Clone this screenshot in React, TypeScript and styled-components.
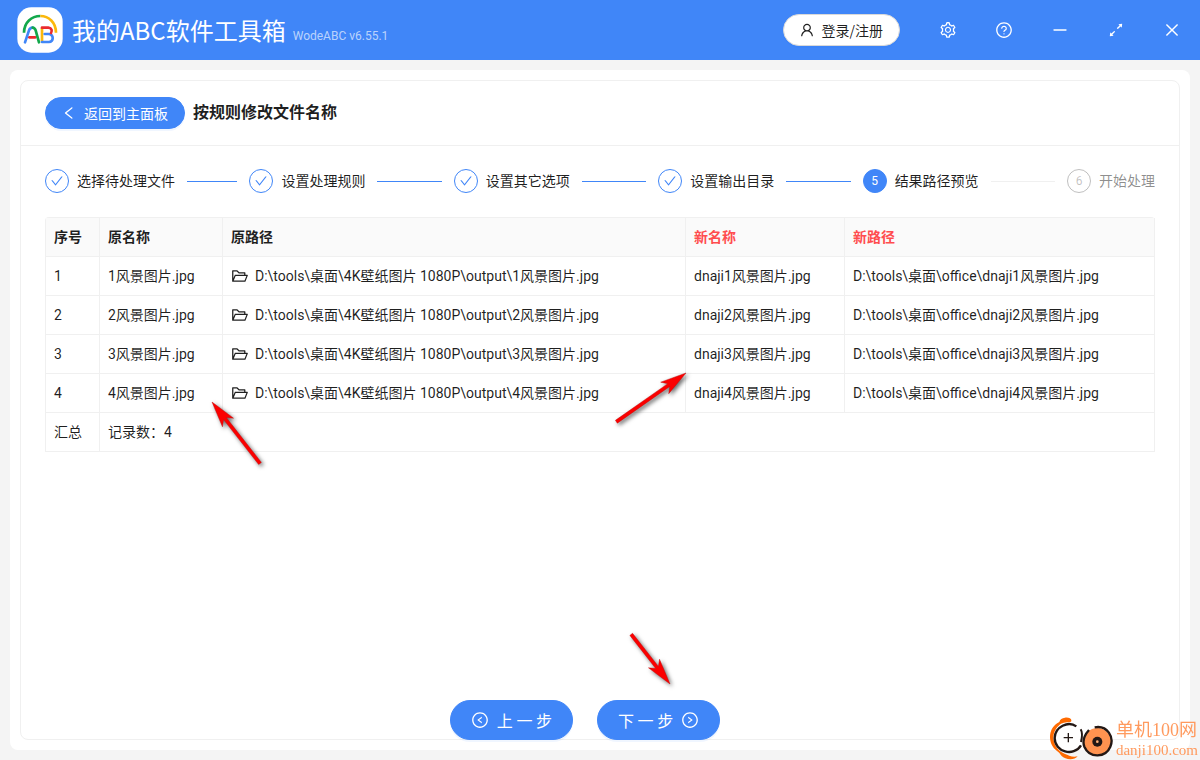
import React from "react";
import styled, { createGlobalStyle, css } from "styled-components";
import {
  AiOutlineArrowsAlt,
  AiOutlineCheck,
  AiOutlineClose,
  AiOutlineFolderOpen,
  AiOutlineLeft,
  AiOutlineLeftCircle,
  AiOutlineMinus,
  AiOutlineQuestionCircle,
  AiOutlineRightCircle,
  AiOutlineSetting,
  AiOutlineUser,
} from "react-icons/ai";

const blue = "#4086f8";
const line = "#f0f0f0";
const ink = "rgba(0, 0, 0, 0.88)";

const GlobalStyle = createGlobalStyle`
  *, *::before, *::after { box-sizing: border-box; }
  body {
    margin: 0;
    background: #f4f4f4;
    color: ${ink};
    font-family: Roboto, "Noto Sans CJK SC", sans-serif;
    font-size: 14px;
    line-height: 22px;
  }
  button { font: inherit; cursor: pointer; }
  svg { display: block; flex: none; }
`;

const Window = styled.div`
  min-height: 100vh;
  display: flex;
  flex-direction: column;
`;

const TitleBar = styled.header`
  height: 60px;
  display: flex;
  align-items: center;
  padding-left: 17px;
  background: ${blue};
  color: #fff;
`;

const Brand = styled.div`
  flex: 1;
  display: flex;
  align-items: baseline;
  gap: 7px;
  margin-left: 9px;
  white-space: nowrap;
`;

const AppName = styled.h1`
  margin: 0;
  font-family: "Noto Sans CJK SC", sans-serif;
  font-size: 24px;
  line-height: 32px;
  font-weight: 400;
`;

const Version = styled.span`
  font-size: 12px;
  color: rgba(255, 255, 255, 0.65);
`;

const Pill = styled.button<{ $light?: boolean; $large?: boolean }>`
  display: inline-flex;
  align-items: center;
  gap: ${(p) => (p.$large ? 8 : 7)}px;
  height: ${(p) => (p.$large ? 40 : 32)}px;
  padding: ${(p) => (p.$large ? "0 20px" : "0 16px 0 15px")};
  border: 1px solid ${(p) => (p.$light ? "#d9d9d9" : blue)};
  border-radius: 20px;
  background: ${(p) => (p.$light ? "#fff" : blue)};
  color: ${(p) => (p.$light ? ink : "#fff")};
  font-family: "Noto Sans CJK SC", sans-serif;
  font-size: ${(p) => (p.$large ? 16 : 14)}px;
  box-shadow: 0 2px 0 rgba(5, 100, 255, 0.06);
  white-space: nowrap;
`;

const WindowButtons = styled.nav`
  display: flex;
  margin-left: 20px;
`;

const WindowButton = styled.button`
  width: 56px;
  height: 60px;
  display: grid;
  place-items: center;
  padding: 0;
  border: 0;
  background: transparent;
  color: #fff;
`;

const Panel = styled.main`
  flex: 1;
  display: flex;
  margin: 10px;
  padding: 10px;
  border-radius: 8px;
  background: #fff;
`;

const Card = styled.section`
  flex: 1;
  min-width: 0;
  display: flex;
  flex-direction: column;
  border: 1px solid ${line};
  border-radius: 8px;
`;

const CardHead = styled.div`
  display: flex;
  align-items: center;
  gap: 8px;
  padding: 16px 24px;
  border-bottom: 1px solid ${line};
`;

const CardTitle = styled.h2`
  margin: 0;
  font-size: 16px;
  font-weight: 600;
`;

const CardBody = styled.div`
  position: relative;
  flex: 1;
  padding: 23px 24px;
`;

const StepList = styled.ol`
  display: flex;
  gap: 12px;
  margin: 0 0 24px;
  padding: 0;
  list-style: none;
`;

type StepState = "done" | "current" | "waiting";

const StepItem = styled.li<{ $state: StepState }>`
  flex: 1;
  display: flex;
  align-items: center;
  gap: 8px;
  white-space: nowrap;
  color: ${(p) => (p.$state === "waiting" ? "rgba(0, 0, 0, 0.45)" : ink)};

  &::after {
    content: "";
    flex: 1;
    height: 1px;
    margin-left: 4px;
    background: ${(p) => (p.$state === "done" ? blue : line)};
  }

  &:last-child { flex: none; }
  &:last-child::after { display: none; }
`;

const stepLook = {
  done: css`border-color: ${blue}; color: ${blue};`,
  current: css`border-color: ${blue}; background: ${blue}; color: #fff;`,
  waiting: css`border-color: rgba(0, 0, 0, 0.25); color: rgba(0, 0, 0, 0.25);`,
};

const StepMark = styled.span<{ $state: StepState }>`
  width: 24px;
  height: 24px;
  display: grid;
  place-items: center;
  border: 1px solid;
  border-radius: 50%;
  font-size: 12px;
  ${(p) => stepLook[p.$state]}
`;

const Table = styled.table`
  width: 100%;
  table-layout: fixed;
  border-collapse: separate;
  border-spacing: 0;
  border: solid ${line};
  border-width: 1px 0 0 1px;
  border-radius: 4px 4px 0 0;
`;

const Col = styled.col<{ $width?: number }>`
  width: ${(p) => (p.$width ? `${p.$width}px` : "auto")};
`;

const cell = css`
  height: 39px;
  padding: 8px;
  border: solid ${line};
  border-width: 0 1px 1px 0;
  text-align: left;
  white-space: nowrap;
`;

const HeadCell = styled.th<{ $fresh?: boolean }>`
  ${cell}
  background: #fafafa;
  font-weight: 600;
  color: ${(p) => (p.$fresh ? "#ff4d4f" : ink)};
`;

const Cell = styled.td`
  ${cell}
`;

const PathLine = styled.span`
  display: flex;
  align-items: center;
  gap: 6px;
`;

const Actions = styled.footer`
  position: relative;
  display: flex;
  justify-content: center;
  gap: 24px;
  margin-bottom: -1px;
  padding-right: 30px;
`;

const ArrowSvg = styled.svg<{ $left: number; $top: number }>`
  position: absolute;
  left: ${(p) => p.$left}px;
  top: ${(p) => p.$top}px;
  overflow: visible;
  pointer-events: none;
  filter: drop-shadow(2px 2px 2px rgba(0, 0, 0, 0.6));
`;

const ActionPointer = styled.div`
  position: absolute;
  left: 50%;
  top: 0;
`;

const SiteMark = styled.a`
  position: fixed;
  right: 2px;
  bottom: 0;
  display: flex;
  align-items: center;
  gap: 2px;
  color: #ff9a5e;
  text-decoration: none;
  font-family: "Liberation Serif", "Noto Sans CJK SC", serif;
  white-space: nowrap;
`;

const SiteText = styled.span`
  display: flex;
  flex-direction: column;
`;

const SiteName = styled.span`
  font-size: 18px;
  line-height: 24px;
`;

const SiteHost = styled.span`
  font-size: 15px;
  line-height: 16px;
`;

/* A red pointer whose tip is the origin of the drawing. */
function Arrow({ left, top, angle, length }: { left: number; top: number; angle: number; length: number }) {
  return (
    <ArrowSvg $left={left} $top={top} width="1" height="1" aria-hidden="true">
      <g transform={`rotate(${angle})`} fill="#fb0000" stroke="#c00808" strokeWidth="0.4">
        <path d={`M0 0L-26 -7L-21 -1.7H${-length}V1.7H-21L-26 7Z`} />
      </g>
    </ArrowSvg>
  );
}

function AppLogo() {
  return (
    <svg width="46" height="46" viewBox="51 20 138 138" fill="none" strokeWidth="8" strokeLinecap="round" strokeLinejoin="round" aria-hidden="true">
      <rect x="52" y="21" width="136" height="136" rx="42" fill="#fff" />
      <path d="M72 97C72 66 95 47 121 47" stroke="#12a84b" strokeLinecap="butt" />
      <path d="M121 47C146 47 168 66 168 97" stroke="#fbb80c" strokeLinecap="butt" />
      <path d="M88 111H106" stroke="#ea2a2e" />
      <path d="M75 126L87 90C89 84 92 82 98 82" stroke="#4086f8" />
      <path d="M98 82C103 82 105 85 107 90L117 126" stroke="#12a84b" />
      <path d="M126 84V122" stroke="#fbb80c" />
      <path d="M134 101H146C163 103 161 125 147 125H126" stroke="#4086f8" />
      <path d="M126 82H145C156 83 157 92 153 98" stroke="#ea2a2e" />
    </svg>
  );
}

function SiteLogo() {
  return (
    <svg width="64" height="44" viewBox="63 50 192 132" fill="none" aria-hidden="true">
      <path d="M126 67C131 60 120 53 108 55C99 56 93 60 91 68C56 84 54 134 84 155C92 160 92 164 98 170C108 181 136 184 146 171C130 175 118 168 108 164C68 146 62 100 92 76C102 67 116 70 126 67Z" fill="#ff6a00" />
      <path d="M142 81C118 64 78 82 77 116C77 158 134 174 156 138" stroke="#231815" strokeWidth="7" fill="#fff" />
      <path d="M118 101V129M104 115H132" stroke="#231815" strokeWidth="4" />
      <circle cx="205" cy="127" r="41" fill="#ff9350" />
      <path d="M197 84C236 77 256 114 244 142C230 175 182 178 166 142C160 126 164 110 180 92" stroke="#231815" strokeWidth="7" />
      <path d="M155 90C160 98 160 112 156 128" stroke="#231815" strokeWidth="6" />
      <circle cx="205" cy="127" r="15" fill="#231815" />
      <circle cx="205" cy="127" r="4" fill="#ffb27a" />
    </svg>
  );
}

const steps: { title: string; state: StepState }[] = [
  { title: "选择待处理文件", state: "done" },
  { title: "设置处理规则", state: "done" },
  { title: "设置其它选项", state: "done" },
  { title: "设置输出目录", state: "done" },
  { title: "结果路径预览", state: "current" },
  { title: "开始处理", state: "waiting" },
];

const files = [1, 2, 3, 4].map((n) => `${n}风景图片.jpg`);

export default function App() {
  return (
    <Window>
      <GlobalStyle />
      <TitleBar>
        <AppLogo />
        <Brand>
          <AppName>我的ABC软件工具箱</AppName>
          <Version>WodeABC v6.55.1</Version>
        </Brand>
        <Pill type="button" $light>
          <AiOutlineUser size={16} />
          登录/注册
        </Pill>
        <WindowButtons aria-label="窗口">
          <WindowButton type="button" aria-label="设置"><AiOutlineSetting size={18} /></WindowButton>
          <WindowButton type="button" aria-label="帮助"><AiOutlineQuestionCircle size={18} /></WindowButton>
          <WindowButton type="button" aria-label="最小化"><AiOutlineMinus size={18} /></WindowButton>
          <WindowButton type="button" aria-label="最大化"><AiOutlineArrowsAlt size={18} /></WindowButton>
          <WindowButton type="button" aria-label="关闭"><AiOutlineClose size={18} /></WindowButton>
        </WindowButtons>
      </TitleBar>

      <Panel>
        <Card>
          <CardHead>
            <Pill type="button">
              <AiOutlineLeft size={16} />
              返回到主面板
            </Pill>
            <CardTitle>按规则修改文件名称</CardTitle>
          </CardHead>

          <CardBody>
            <StepList>
              {steps.map((step, i) => (
                <StepItem key={step.title} $state={step.state}>
                  <StepMark $state={step.state}>
                    {step.state === "done" ? <AiOutlineCheck size={14} /> : i + 1}
                  </StepMark>
                  {step.title}
                </StepItem>
              ))}
            </StepList>

            <Table>
              <colgroup>
                <Col $width={54} />
                <Col $width={123} />
                <Col />
                <Col $width={159} />
                <Col $width={310} />
              </colgroup>
              <thead>
                <tr>
                  <HeadCell>序号</HeadCell>
                  <HeadCell>原名称</HeadCell>
                  <HeadCell>原路径</HeadCell>
                  <HeadCell $fresh>新名称</HeadCell>
                  <HeadCell $fresh>新路径</HeadCell>
                </tr>
              </thead>
              <tbody>
                {files.map((name, i) => (
                  <tr key={name}>
                    <Cell>{i + 1}</Cell>
                    <Cell>{name}</Cell>
                    <Cell>
                      <PathLine>
                        <AiOutlineFolderOpen size={18} />
                        {`D:\\tools\\桌面\\4K壁纸图片 1080P\\output\\${name}`}
                      </PathLine>
                    </Cell>
                    <Cell>{`dnaji${name}`}</Cell>
                    <Cell>{`D:\\tools\\桌面\\office\\dnaji${name}`}</Cell>
                  </tr>
                ))}
              </tbody>
              <tfoot>
                <tr>
                  <Cell>汇总</Cell>
                  <Cell colSpan={4}>记录数：4</Cell>
                </tr>
              </tfoot>
            </Table>

            <Arrow left={191} top={256} angle={-128} length={78} />
            <Arrow left={665} top={227} angle={-35} length={85} />
          </CardBody>

          <Actions>
            <Pill type="button" $large>
              <AiOutlineLeftCircle size={18} />
              上 一 步
            </Pill>
            <Pill type="button" $large>
              下 一 步
              <AiOutlineRightCircle size={18} />
            </Pill>
            <ActionPointer>
              <Arrow left={70} top={-16} angle={52} length={63} />
            </ActionPointer>
          </Actions>
        </Card>
      </Panel>

      <SiteMark href="#danji100">
        <SiteLogo />
        <SiteText>
          <SiteName>单机100网</SiteName>
          <SiteHost>danji100.com</SiteHost>
        </SiteText>
      </SiteMark>
    </Window>
  );
}
